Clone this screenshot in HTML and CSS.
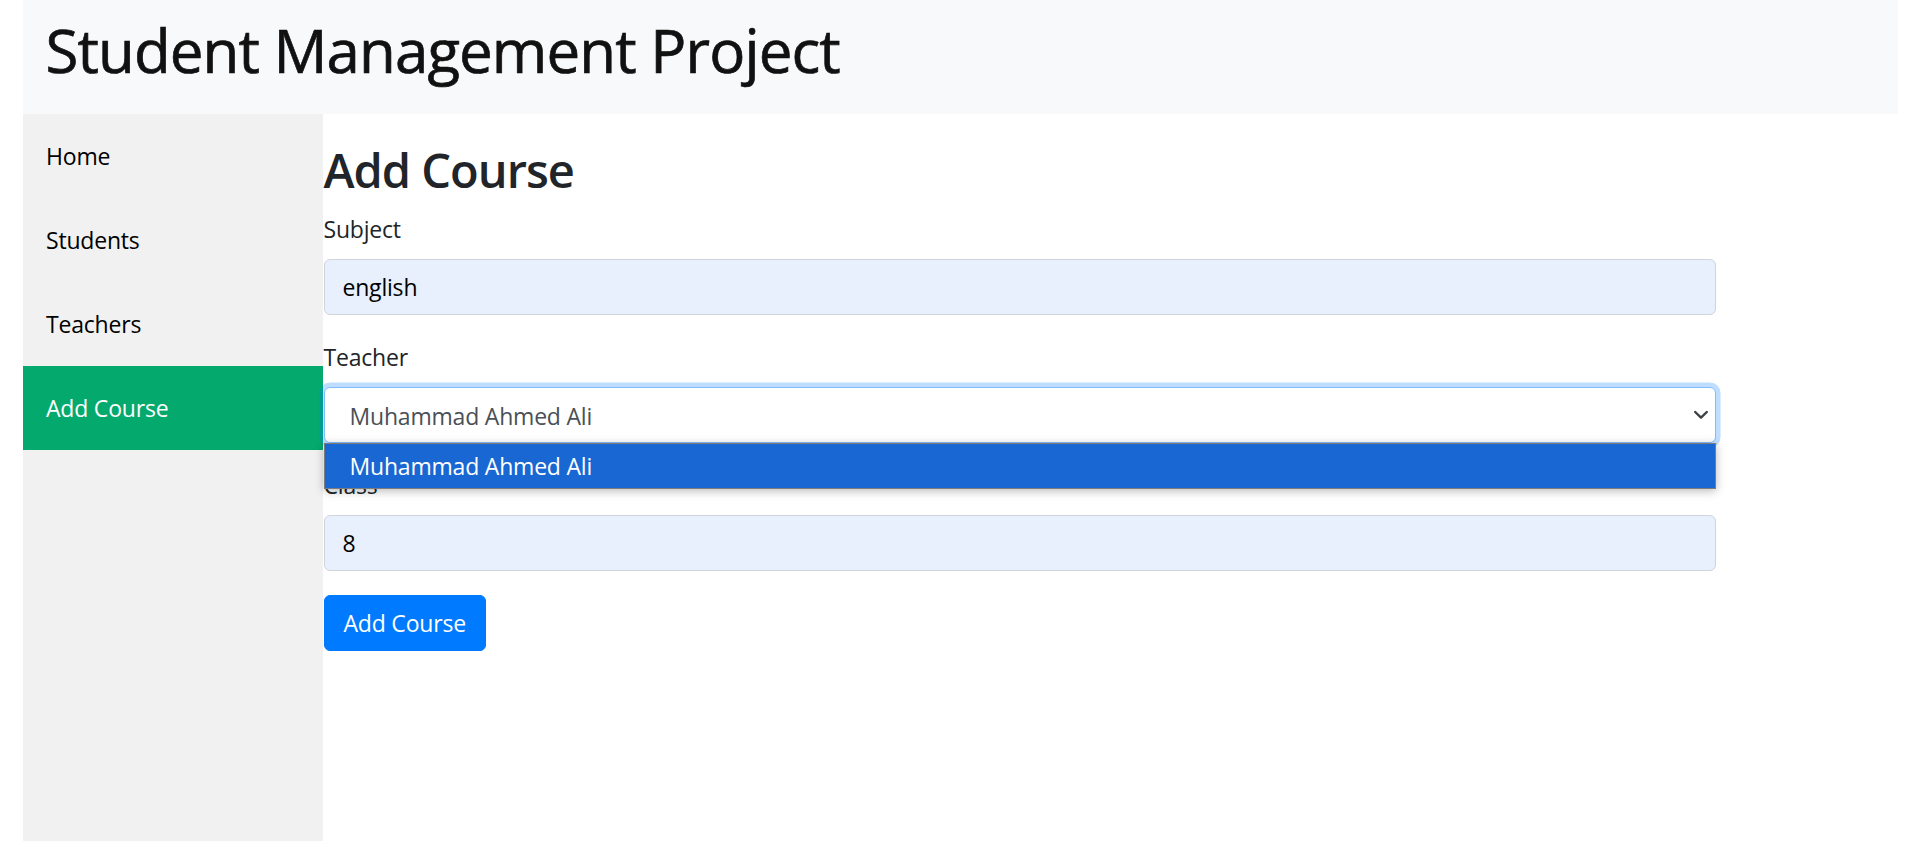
FILE: index.html
```html
<!DOCTYPE html>
<html lang="en">
<head>
<meta charset="utf-8">
<title>Student Management Project</title>
<link rel="stylesheet" href="styles.css">
</head>
<body>
<div class="page">
  <header class="topbar">
    <h1 class="brand">Student Management Project</h1>
  </header>
  <div class="layout">
    <nav class="sidebar">
      <a href="#" class="side-link">Home</a>
      <a href="#" class="side-link">Students</a>
      <a href="#" class="side-link">Teachers</a>
      <a href="#" class="side-link active">Add Course</a>
    </nav>
    <main class="content">
      <h2 class="page-title">Add Course</h2>
      <form class="course-form">
        <div class="form-group">
          <label class="form-label" for="subject">Subject</label>
          <input class="form-control autofilled" id="subject" type="text" value="english">
        </div>
        <div class="form-group">
          <label class="form-label" for="teacher">Teacher</label>
          <div class="select-wrap">
            <select class="form-control form-select focused" id="teacher">
              <option>Muhammad Ahmed Ali</option>
            </select>
            <svg class="select-arrow" width="14" height="10" viewBox="0 0 14 10" aria-hidden="true">
              <polyline points="1.2,2 7,7.6 12.8,2" fill="none" stroke="#3c4043" stroke-width="2.4" stroke-linecap="round" stroke-linejoin="round"/>
            </svg>
            <ul class="select-popup">
              <li class="select-option selected">Muhammad Ahmed Ali</li>
            </ul>
          </div>
        </div>
        <div class="form-group">
          <label class="form-label" for="class">Class</label>
          <input class="form-control autofilled" id="class" type="text" value="8">
        </div>
        <button type="button" class="btn-primary">Add Course</button>
      </form>
    </main>
  </div>
</div>
</body>
</html>
```

FILE: styles.css
```css
html, body {
  margin: 0;
  padding: 0;
  background: #ffffff;
}

body {
  font-family: "Open Sans", "Noto Sans", sans-serif;
  font-size: 23px;
  letter-spacing: -0.2px;
  color: #212529;
}

.page {
  padding: 0 22.5px;
  min-height: 100vh;
  display: flex;
  flex-direction: column;
  box-sizing: border-box;
}

.topbar {
  background: #f8f9fa;
  height: 114px;
  box-sizing: border-box;
  padding: 14px 22px 0 23px;
  flex: none;
}

.brand {
  margin: 0;
  font-size: 60px;
  line-height: 72px;
  font-weight: 400;
  letter-spacing: -0.9px;
  color: #111111;
  -webkit-text-stroke: 0.7px #111111;
}

.layout {
  flex: 1;
  display: flex;
  align-items: stretch;
}

.sidebar {
  width: 300px;
  flex: none;
  background: #f1f1f1;
  display: flex;
  flex-direction: column;
}

.side-link {
  display: block;
  padding: 24px 22.5px 24px 23.5px;
  line-height: 36px;
  color: #000000;
  text-decoration: none;
}

.side-link.active {
  background: #04aa6d;
  color: #ffffff;
}

.content {
  flex: 1;
  padding-top: 28px;
  padding-left: 1px;
}

.page-title {
  margin: 0 0 11px;
  font-size: 47px;
  line-height: 57.6px;
  font-weight: 600;
  letter-spacing: -1px;
  color: #212529;
}

.course-form {
  width: 1392px;
}

.form-group {
  margin-bottom: 24px;
}

.form-label {
  display: block;
  line-height: 36px;
  margin-bottom: 12px;
}

.form-control {
  display: block;
  width: 100%;
  height: 56px;
  box-sizing: border-box;
  padding: 0 18px;
  font-family: inherit;
  font-size: 23px;
  letter-spacing: -0.2px;
  color: #495057;
  background: #ffffff;
  border: 1px solid #ced4da;
  border-radius: 6px;
  outline: none;
  margin: 0;
}

.form-control.autofilled {
  background: #e8f0fe;
  color: #000000;
}

.select-wrap {
  position: relative;
}

.form-select {
  appearance: none;
  -webkit-appearance: none;
  padding: 3px 40px 0 25px;
}

.form-select.focused {
  border-color: #80bdff;
  box-shadow: 0 0 0 4.5px rgba(0, 123, 255, 0.25);
}

.select-arrow {
  position: absolute;
  right: 8px;
  top: 23px;
  pointer-events: none;
}

.select-popup {
  position: absolute;
  left: 0;
  right: 0;
  top: 56px;
  margin: 0;
  padding: 0;
  list-style: none;
  background: #ffffff;
  border: 1px solid #7c7c7c;
  box-shadow: 0 2px 9px rgba(0, 0, 0, 0.28);
  z-index: 5;
}

.select-option {
  height: 44px;
  box-sizing: border-box;
  padding: 1px 0 0 25px;
  line-height: 43px;
  color: #ffffff;
}

.select-option.selected {
  background: #1967d2;
}

.btn-primary {
  display: inline-block;
  height: 56px;
  box-sizing: border-box;
  padding: 0 19px;
  font-family: inherit;
  font-size: 23px;
  letter-spacing: -0.2px;
  line-height: 36px;
  color: #ffffff;
  background: #007bff;
  border: 1px solid #007bff;
  border-radius: 6px;
  cursor: pointer;
}
```
